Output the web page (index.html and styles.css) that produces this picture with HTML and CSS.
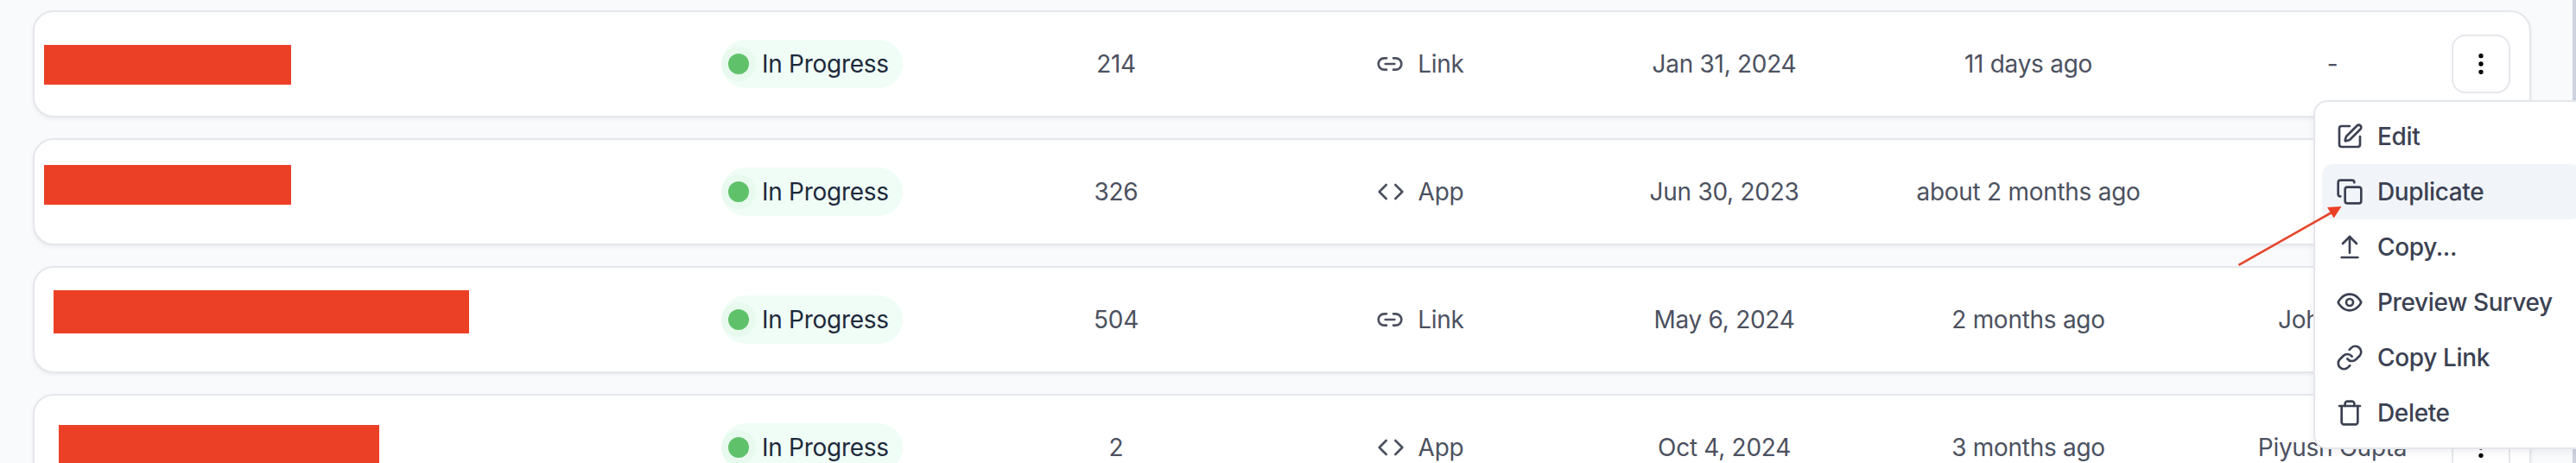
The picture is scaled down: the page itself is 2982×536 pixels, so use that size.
FILE: index.html
```html
<!DOCTYPE html>
<html lang="en">
<head>
<meta charset="utf-8">
<title>Surveys</title>
<link rel="stylesheet" href="styles.css">
</head>
<body>
<svg class="sprite" aria-hidden="true">
  <symbol id="i-link2" viewBox="0 0 24 24"><path d="M9 17H7A5 5 0 0 1 7 7h2"/><path d="M15 7h2a5 5 0 1 1 0 10h-2"/><path d="M8 12h8"/></symbol>
  <symbol id="i-code" viewBox="0 0 24 24"><path d="m16 18 6-6-6-6"/><path d="m8 6-6 6 6 6"/></symbol>
  <symbol id="i-more" viewBox="0 0 24 24"><circle cx="12" cy="12" r="1"/><circle cx="12" cy="5" r="1"/><circle cx="12" cy="19" r="1"/></symbol>
  <symbol id="i-edit" viewBox="0 0 24 24"><path d="M12 3H5a2 2 0 0 0-2 2v14a2 2 0 0 0 2 2h14a2 2 0 0 0 2-2v-7"/><path d="M18.375 2.625a1 1 0 0 1 3 3l-9.013 9.014a2 2 0 0 1-.853.505l-2.873.84a.5.5 0 0 1-.62-.62l.84-2.873a2 2 0 0 1 .506-.852z"/></symbol>
  <symbol id="i-copy" viewBox="0 0 24 24"><rect width="14" height="14" x="8" y="8" rx="2"/><path d="M4 16c-1.1 0-2-.9-2-2V4c0-1.1.9-2 2-2h10c1.1 0 2 .9 2 2"/></symbol>
  <symbol id="i-up" viewBox="0 0 24 24"><path d="m18 9-6-6-6 6"/><path d="M12 3v14"/><path d="M5 21h14"/></symbol>
  <symbol id="i-eye" viewBox="0 0 24 24"><path d="M2 12s3-7 10-7 10 7 10 7-3 7-10 7-10-7-10-7Z"/><circle cx="12" cy="12" r="3"/></symbol>
  <symbol id="i-link" viewBox="0 0 24 24"><path d="M10 13a5 5 0 0 0 7.54.54l3-3a5 5 0 0 0-7.07-7.07l-1.72 1.71"/><path d="M14 11a5 5 0 0 0-7.54-.54l-3 3a5 5 0 0 0 7.07 7.07l1.71-1.71"/></symbol>
  <symbol id="i-trash" viewBox="0 0 24 24"><path d="M3 6h18"/><path d="M19 6v14c0 1-1 2-2 2H7c-1 0-2-1-2-2V6"/><path d="M8 6V4c0-1 1-2 2-2h4c1 0 2 1 2 2v2"/></symbol>
</svg>

<main class="list">
  <article class="card">
    <div class="name name-1"><span class="redacted"></span></div>
    <div class="cell"><span class="badge"><i class="dot"></i>In Progress</span></div>
    <div class="cell">214</div>
    <div class="cell kind"><svg class="icon"><use href="#i-link2"/></svg>Link</div>
    <div class="cell">Jan 31, 2024</div>
    <div class="cell">11 days ago</div>
    <div class="cell">-</div>
    <button class="more"><svg class="icon"><use href="#i-more"/></svg></button>
  </article>
  <article class="card">
    <div class="name name-2"><span class="redacted"></span></div>
    <div class="cell"><span class="badge"><i class="dot"></i>In Progress</span></div>
    <div class="cell">326</div>
    <div class="cell kind"><svg class="icon"><use href="#i-code"/></svg>App</div>
    <div class="cell">Jun 30, 2023</div>
    <div class="cell">about 2 months ago</div>
    <div class="cell"></div>
  </article>
  <article class="card">
    <div class="name name-3"><span class="redacted"></span></div>
    <div class="cell"><span class="badge"><i class="dot"></i>In Progress</span></div>
    <div class="cell">504</div>
    <div class="cell kind"><svg class="icon"><use href="#i-link2"/></svg>Link</div>
    <div class="cell">May 6, 2024</div>
    <div class="cell">2 months ago</div>
    <div class="cell owner-cut">Joh</div>
  </article>
  <article class="card">
    <div class="name name-4"><span class="redacted"></span></div>
    <div class="cell"><span class="badge"><i class="dot"></i>In Progress</span></div>
    <div class="cell">2</div>
    <div class="cell kind"><svg class="icon"><use href="#i-code"/></svg>App</div>
    <div class="cell">Oct 4, 2024</div>
    <div class="cell">3 months ago</div>
    <div class="cell">Piyush Gupta</div>
    <button class="more"><svg class="icon"><use href="#i-more"/></svg></button>
  </article>
</main>

<div class="scrollbar"></div>

<nav class="menu">
  <a class="item"><svg class="icon"><use href="#i-edit"/></svg>Edit</a>
  <a class="item active"><svg class="icon"><use href="#i-copy"/></svg>Duplicate</a>
  <a class="item"><svg class="icon"><use href="#i-up"/></svg>Copy...</a>
  <a class="item"><svg class="icon"><use href="#i-eye"/></svg>Preview Survey</a>
  <a class="item"><svg class="icon"><use href="#i-link"/></svg>Copy Link</a>
  <a class="item"><svg class="icon"><use href="#i-trash"/></svg>Delete</a>
</nav>

<svg class="arrow" viewBox="0 0 132 80"><path class="shaft" d="M11.500 76.800 120 15.500"/><path class="head" d="M130.500 9 114 10l7.700 12.500z"/></svg>
</body>
</html>
```

FILE: styles.css
```css
* { box-sizing: border-box; }
body {
  margin: 0;
  width: 2982px;
  height: 536px;
  overflow: hidden;
  position: relative;
  background: #f9fafc;
  color: #4c5160;
  font: 400 28px/40px Inter, sans-serif;
  letter-spacing: -0.28px;
}
.sprite { display: none; }
.icon {
  width: 32px;
  height: 32px;
  flex: none;
  fill: none;
  stroke: currentColor;
  stroke-width: 2;
  stroke-linecap: round;
  stroke-linejoin: round;
}
.list {
  display: flex;
  flex-direction: column;
  gap: 24px;
  height: 536px;
  overflow: hidden;
  padding: 12px 52px 0 38px;
}
.card {
  display: grid;
  grid-template-columns: 724px repeat(6, 352px) 1fr;
  align-items: center;
  height: 124px;
  flex: none;
  background: #fff;
  border: 2px solid #e5e7eb;
  border-radius: 24px;
  box-shadow: 0 2px 4px rgba(15, 23, 42, .06);
}
.name { align-self: start; }
.redacted { display: block; background: #eb4026; }
.name-1 { padding: 38px 0 0 11px; }
.name-2 { padding: 29px 0 0 11px; }
.name-1 .redacted, .name-2 .redacted { width: 286px; height: 46px; }
.name-3 { padding: 26px 0 0 22px; }
.name-3 .redacted { width: 481px; height: 50px; }
.name-4 { padding: 34px 0 0 28px; }
.name-4 .redacted { width: 371px; height: 48px; }
.cell {
  display: flex;
  align-items: center;
  justify-content: center;
  white-space: nowrap;
}
.kind { gap: 16px; }
.owner-cut { justify-content: flex-start; padding-left: 113px; }
.badge {
  display: flex;
  align-items: center;
  gap: 15px;
  width: 210px;
  height: 56px;
  padding-left: 8px;
  border-radius: 28px;
  background: #effdf6;
  color: #1e293b;
}
.dot {
  width: 24px;
  height: 24px;
  flex: none;
  border-radius: 50%;
  background: #5fc26a;
  box-shadow: 0 0 0 8px #e8f9ee;
}
.more {
  display: grid;
  place-items: center;
  width: 68px;
  height: 68px;
  margin-left: -38px;
  padding: 0;
  border: 2px solid #e5e7eb;
  border-radius: 16px;
  background: #fff;
  color: #000;
}
.scrollbar {
  position: absolute;
  top: 0;
  right: 0;
  width: 4px;
  height: 536px;
  background: #cdd3de;
}
.menu {
  position: absolute;
  left: 2678px;
  top: 116px;
  width: 320px;
  padding: 8px;
  border: 2px solid #e3e6ea;
  border-radius: 16px;
  background: #fff;
  box-shadow: 0 4px 8px rgba(15, 23, 42, .06);
  color: #3b4152;
  font-weight: 500;
  letter-spacing: -0.36px;
}
.item {
  display: flex;
  align-items: center;
  gap: 16px;
  height: 64px;
  padding: 0 16px;
  border-radius: 12px;
}
.active { background: #f1f5f9; }
.arrow {
  position: absolute;
  left: 2580px;
  top: 230px;
  width: 132px;
  height: 80px;
}
.shaft { stroke: #e5452b; stroke-width: 2.6; fill: none; }
.head { fill: #eb4026; }
```
